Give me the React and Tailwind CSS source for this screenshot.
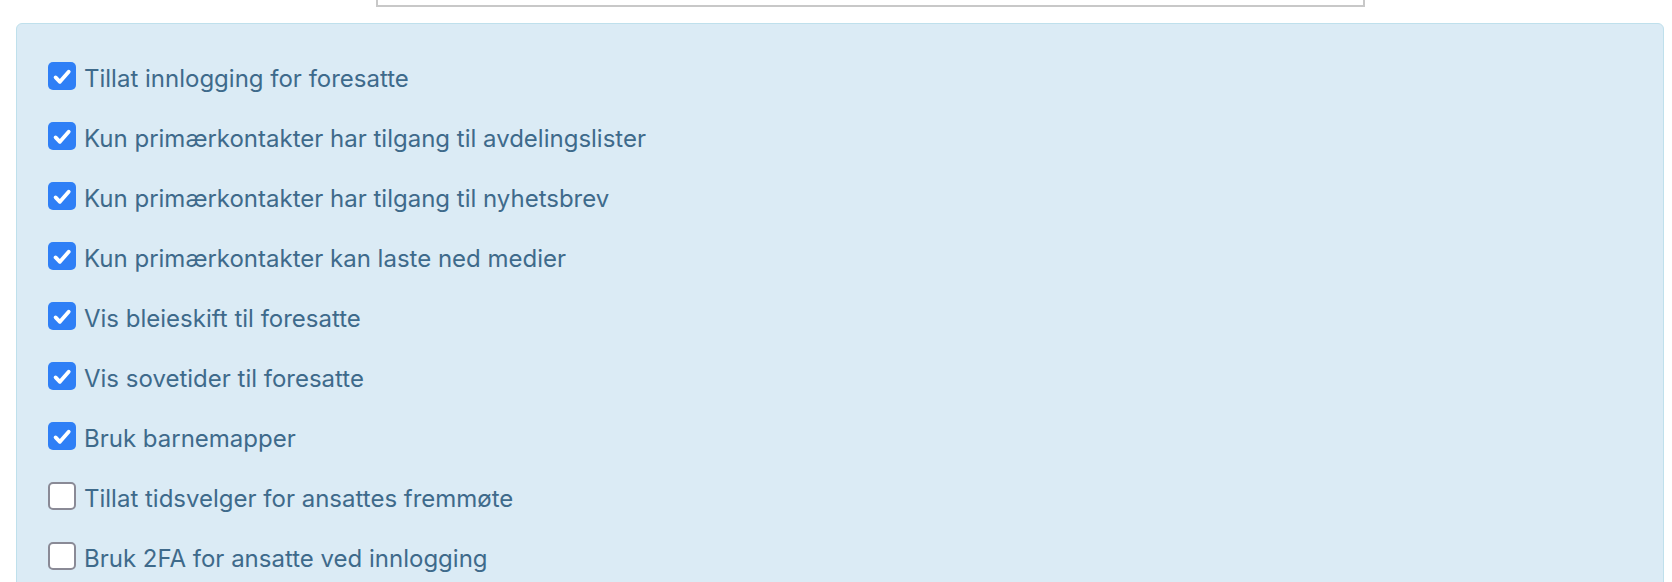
const options = [
  { label: "Tillat innlogging for foresatte", checked: true },
  { label: "Kun primærkontakter har tilgang til avdelingslister", checked: true },
  { label: "Kun primærkontakter har tilgang til nyhetsbrev", checked: true },
  { label: "Kun primærkontakter kan laste ned medier", checked: true },
  { label: "Vis bleieskift til foresatte", checked: true },
  { label: "Vis sovetider til foresatte", checked: true },
  { label: "Bruk barnemapper", checked: true },
  { label: "Tillat tidsvelger for ansattes fremmøte", checked: false },
  { label: "Bruk 2FA for ansatte ved innlogging", checked: false },
];

function Box({ checked }) {
  if (checked) {
    return (
      <span className="h-[28px] w-[28px] shrink-0 rounded-[5px] bg-[#2f7ff6]">
        <svg width="28" height="28" viewBox="0 0 28 28" fill="none">
          <path
            d="M7.6 15.4l4.3 4.4 8.8-10"
            stroke="white"
            strokeWidth="3.8"
            strokeLinecap="round"
            strokeLinejoin="round"
          />
        </svg>
      </span>
    );
  }
  return (
    <span className="h-[28px] w-[28px] shrink-0 rounded-[5px] border-2 border-[#8a8a96] bg-white" />
  );
}

export default function App() {
  return (
    <div className="min-h-[582px] bg-white font-['Inter',sans-serif]">
      <div className="ml-[376px] h-[7px] w-[989px] border-x-2 border-b-2 border-[#c8c8c8]" />
      <div className="mt-[16px] ml-4 mr-2 rounded-md border border-[#bfe0ec] bg-[#dbebf5] pl-[31px] pt-[38px] pb-10">
        <div className="flex flex-col gap-[32px]">
          {options.map((o) => (
            <label key={o.label} className="flex h-[28px] items-center gap-2">
              <Box checked={o.checked} />
              <span className="mt-[5px] text-[24px] leading-none text-[#3e6a8b]">{o.label}</span>
            </label>
          ))}
        </div>
      </div>
    </div>
  );
}
